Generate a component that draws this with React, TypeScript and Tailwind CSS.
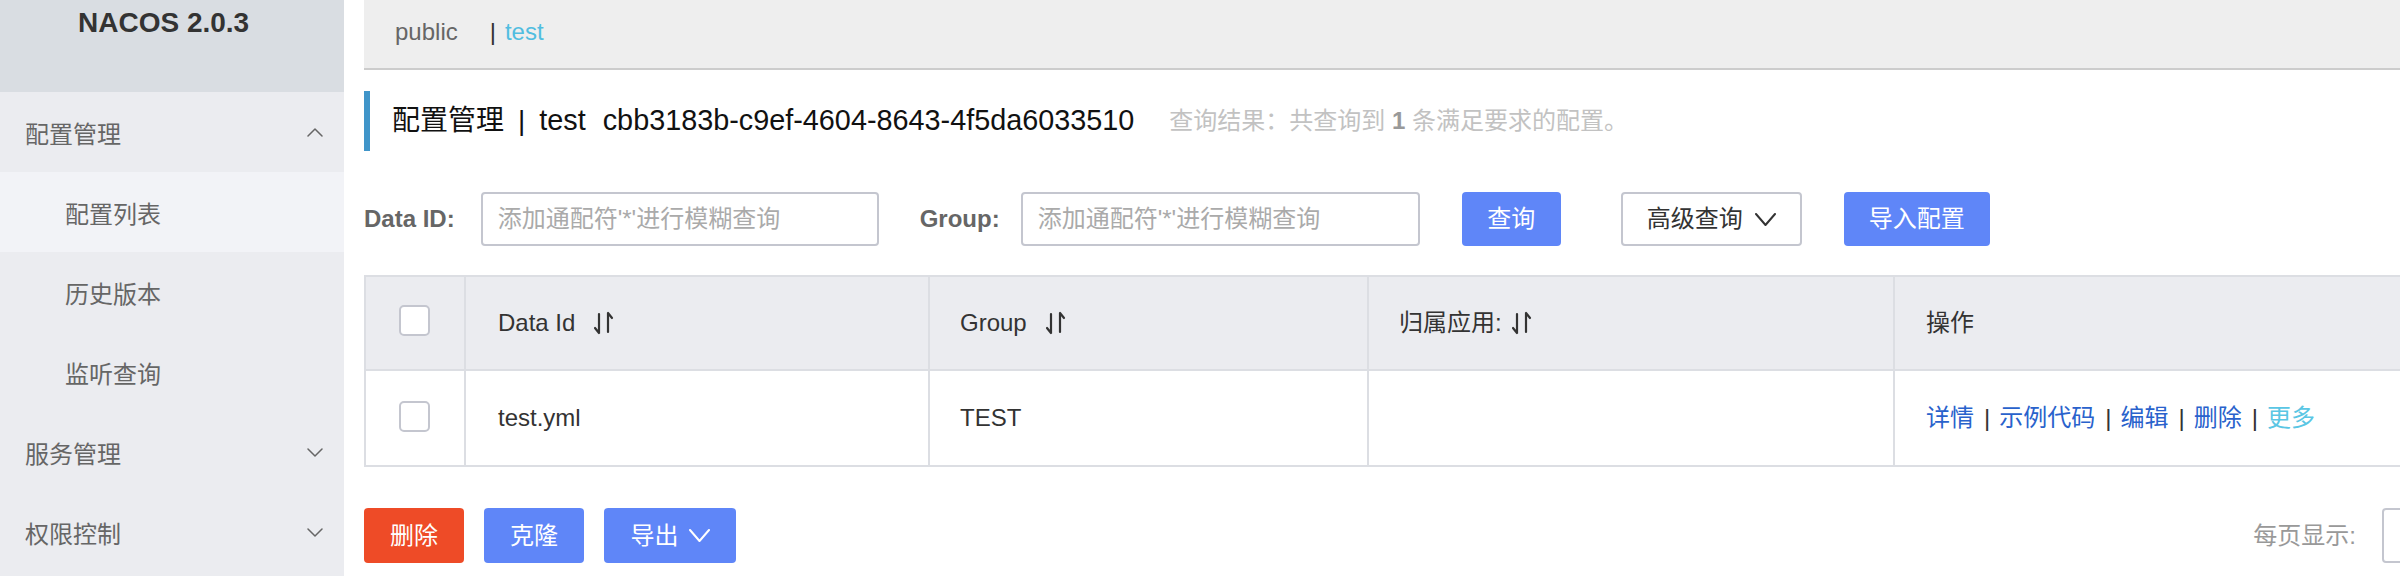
import React from 'react';

const FONT = "font-['Liberation_Sans','Noto_Sans_CJK_SC',sans-serif]";

const Chevron: React.FC<{ up?: boolean; className?: string; w?: number; h?: number; sw?: number }> = ({
  up,
  className,
  w = 16,
  h = 9,
  sw = 1.5,
}) => (
  <svg width={w} height={h} viewBox={`0 0 ${w} ${h}`} className={className} fill="none">
    <polyline
      points={up ? `1,${h - 1} ${w / 2},1 ${w - 1},${h - 1}` : `1,1 ${w / 2},${h - 1} ${w - 1},1`}
      stroke="currentColor"
      strokeWidth={sw}
      strokeLinecap="round"
      strokeLinejoin="round"
    />
  </svg>
);

const SortIcon = () => (
  <svg width="20" height="24" viewBox="0 0 20 24" fill="none" stroke="#333" strokeWidth="2.2" strokeLinecap="round" strokeLinejoin="round">
    <path d="M5 3v19M5 22L1 17" />
    <path d="M14 2v19M14 2l4 5" />
  </svg>
);

const Checkbox = ({ className = '' }: { className?: string }) => (
  <div className={`w-[31px] h-[31px] rounded-[5px] border-2 border-[#c4c6cf] bg-white ${className}`} />
);

const MENU = [
  { label: '配置管理', level: 0, open: true },
  { label: '配置列表', level: 1, active: true },
  { label: '历史版本', level: 1 },
  { label: '监听查询', level: 1 },
  { label: '服务管理', level: 0 },
  { label: '权限控制', level: 0 },
];

const ACTIONS = ['详情', '示例代码', '编辑', '删除'];

export default function App() {
  return (
    <div className={`flex w-[2400px] h-[576px] overflow-hidden bg-white text-[24px] ${FONT}`}>
      {/* Sidebar */}
      <aside className="w-[344px] shrink-0 bg-[#ebecf0] flex flex-col">
        <div className="h-[92px] bg-[#d9dde2] pl-[78px] pt-[9px]">
          <div className="text-[28px] leading-[28px] font-bold text-[#333]">NACOS 2.0.3</div>
        </div>
        {MENU.map((item) => (
          <div
            key={item.label}
            className={`h-[80px] flex items-center justify-between pr-[21px] text-[#666] ${
              item.level === 1 ? 'pl-[65px]' : 'pl-[25px]'
            } ${item.active ? 'bg-[#f2f3f7]' : ''}`}
          >
            <span className="pt-[6px]">{item.label}</span>
            {item.level === 0 && <Chevron up={item.open} className="text-[#666]" />}
          </div>
        ))}
      </aside>

      {/* Main */}
      <main className="flex-1 min-w-0 pl-[20px] overflow-hidden">
        <div className="w-[2200px]">
          {/* Namespace bar */}
          <div className="h-[70px] bg-[#eeeeee] border-b-2 border-[#cccccc] flex items-center pl-[31px] pb-[4px]">
            <span className="text-[#666]">public</span>
            <span className="ml-[32px] text-[#333]">|</span>
            <span className="ml-[9px] text-[#51bde0]">test</span>
          </div>

          {/* Title */}
          <div className="mt-[21px] h-[60px] border-l-[6px] border-[#4095c9] pl-[22px] flex items-center">
            <span className="text-[28px] text-[#111]">配置管理</span>
            <span className="text-[28px] mx-[14px] text-[#111]">|</span>
            <span className="text-[28.8px] text-[#111]">test</span>
            <span className="text-[28.8px] ml-[17px] text-[#111]">cbb3183b-c9ef-4604-8643-4f5da6033510</span>
            <span className="ml-[35px] text-[#c2c2c2]">
              查询结果：共查询到 <b className="text-[#999]">1</b> 条满足要求的配置。
            </span>
          </div>

          {/* Filters */}
          <div className="mt-[41px] h-[54px] flex items-center">
            <span className="font-bold text-[#666]">Data ID:</span>
            <div className="ml-[26px] w-[398px] h-full border-2 border-[#c4c6cf] rounded-[4px] flex items-center pl-[15px] text-[#aaa]">
              添加通配符'*'进行模糊查询
            </div>
            <span className="ml-[41px] font-bold text-[#666]">Group:</span>
            <div className="ml-[21px] w-[399px] h-full border-2 border-[#c4c6cf] rounded-[4px] flex items-center pl-[15px] text-[#aaa]">
              添加通配符'*'进行模糊查询
            </div>
            <button className="ml-[42px] w-[99px] h-full rounded-[4px] bg-[#5f86f8] text-white">查询</button>
            <button className="ml-[60px] w-[181px] h-full rounded-[4px] border-2 border-[#c4c6cf] bg-white text-[#333] flex items-center justify-center gap-[12px]">
              <span>高级查询</span>
              <Chevron w={21} h={13} sw={2} className="text-[#333]" />
            </button>
            <button className="ml-[42px] w-[146px] h-full rounded-[4px] bg-[#5f86f8] text-white">导入配置</button>
          </div>

          {/* Table */}
          <div className="mt-[29px] border-2 border-[#dcdee3] text-[#333]">
            <div className="grid grid-cols-[100px_464px_439px_526px_1fr] h-[94px] bg-[#ebecf0] border-b-2 border-[#dcdee3]">
              <div className="border-r-2 border-[#dcdee3] flex items-center justify-center pr-[2px]">
                <Checkbox className="mb-[6px]" />
              </div>
              <div className="border-r-2 border-[#dcdee3] flex items-center pl-[32px] gap-[19px]">
                <span>Data Id</span>
                <SortIcon />
              </div>
              <div className="border-r-2 border-[#dcdee3] flex items-center pl-[30px] gap-[19px]">
                <span>Group</span>
                <SortIcon />
              </div>
              <div className="border-r-2 border-[#dcdee3] flex items-center pl-[30px] gap-[10px]">
                <span>归属应用:</span>
                <SortIcon />
              </div>
              <div className="flex items-center pl-[31px]">
                <span>操作</span>
              </div>
            </div>
            <div className="grid grid-cols-[100px_464px_439px_526px_1fr] h-[94px] bg-white">
              <div className="border-r-2 border-[#dcdee3] flex items-center justify-center pr-[2px]">
                <Checkbox className="mb-[4px]" />
              </div>
              <div className="border-r-2 border-[#dcdee3] flex items-center pl-[32px]">test.yml</div>
              <div className="border-r-2 border-[#dcdee3] flex items-center pl-[30px]">TEST</div>
              <div className="border-r-2 border-[#dcdee3]" />
              <div className="flex items-center pl-[31px]">
                {ACTIONS.map((a) => (
                  <React.Fragment key={a}>
                    <span className="text-[#2962cc]">{a}</span>
                    <span className="pl-[10px] pr-[9px] text-[#333]">|</span>
                  </React.Fragment>
                ))}
                <span className="text-[#5ac6e4]">更多</span>
              </div>
            </div>
          </div>

          {/* Bottom bar */}
          <div className="mt-[41px] h-[55px] flex items-center w-[2168px]">
            <button className="w-[100px] h-full rounded-[4px] bg-[#ee4b27] text-white">删除</button>
            <button className="ml-[20px] w-[100px] h-full rounded-[4px] bg-[#5f86f8] text-white">克隆</button>
            <button className="ml-[20px] w-[132px] h-full rounded-[4px] bg-[#5f86f8] text-white flex items-center justify-center gap-[10px]">
              <span>导出</span>
              <Chevron w={21} h={13} sw={2} className="text-white" />
            </button>
            <div className="ml-auto flex items-center h-full">
              <span className="text-[#999]">每页显示:</span>
              <div className="ml-[26px] w-[150px] h-full border-2 border-[#c4c6cf] rounded-[4px] bg-white" />
            </div>
          </div>
        </div>
      </main>
    </div>
  );
}
